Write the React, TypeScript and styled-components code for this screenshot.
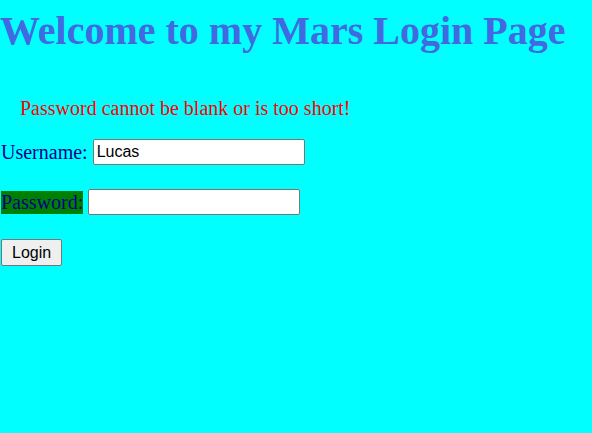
import React from "react";
import styled, { createGlobalStyle } from "styled-components";

const Global = createGlobalStyle`
  html, body { margin: 0; padding: 0; background: cyan; }
  body { font-family: "Liberation Serif", "Times New Roman", serif; }
`;

const Page = styled.div`
  min-height: 100vh;
  background: cyan;
  display: flex;
  flex-direction: column;
  align-items: flex-start;
`;

const Title = styled.h1`
  margin: 8px 0 0 0;
  font-family: "Liberation Serif", "Times New Roman", serif;
  font-size: 40px;
  font-weight: bold;
  line-height: 46px;
  color: royalblue;
`;

const ErrorText = styled.p`
  margin: 43px 0 0 0;
  padding-left: 20px;
  font-size: 20px;
  line-height: 23px;
  color: red;
`;

const Form = styled.form`
  display: flex;
  flex-direction: column;
  align-items: flex-start;
  gap: 24px;
  margin-top: 19px;
`;

const Row = styled.div`
  display: flex;
  align-items: center;
  gap: 5px;
`;

const Label = styled.label<{ $highlight?: boolean }>`
  font-size: 20px;
  color: darkblue;
  background: ${(p) => (p.$highlight ? "green" : "transparent")};
  margin-left: 1px;
`;

const Input = styled.input`
  box-sizing: border-box;
  width: 212px;
  height: 26px;
  padding: 1px 3px;
  border: 1px solid #767676;
  border-radius: 2px;
  background: #fff;
  font-family: "Liberation Sans", Arial, sans-serif;
  font-size: 16px;
  color: #000;
  outline: none;
`;

const Button = styled.button`
  box-sizing: border-box;
  height: 27px;
  padding: 0 10px;
  margin-left: 1px;
  border: 1px solid #767676;
  border-radius: 2px;
  background: #efefef;
  font-family: "Liberation Sans", Arial, sans-serif;
  font-size: 16px;
  color: #000;
`;

export default function App() {
  return (
    <Page>
      <Global />
      <Title>Welcome to my Mars Login Page</Title>
      <ErrorText>Password cannot be blank or is too short!</ErrorText>
      <Form onSubmit={(e) => e.preventDefault()}>
        <Row>
          <Label htmlFor="username">Username:</Label>
          <Input id="username" type="text" defaultValue="Lucas" />
        </Row>
        <Row>
          <Label htmlFor="password" $highlight>
            Password:
          </Label>
          <Input id="password" type="password" />
        </Row>
        <Button type="submit">Login</Button>
      </Form>
    </Page>
  );
}
